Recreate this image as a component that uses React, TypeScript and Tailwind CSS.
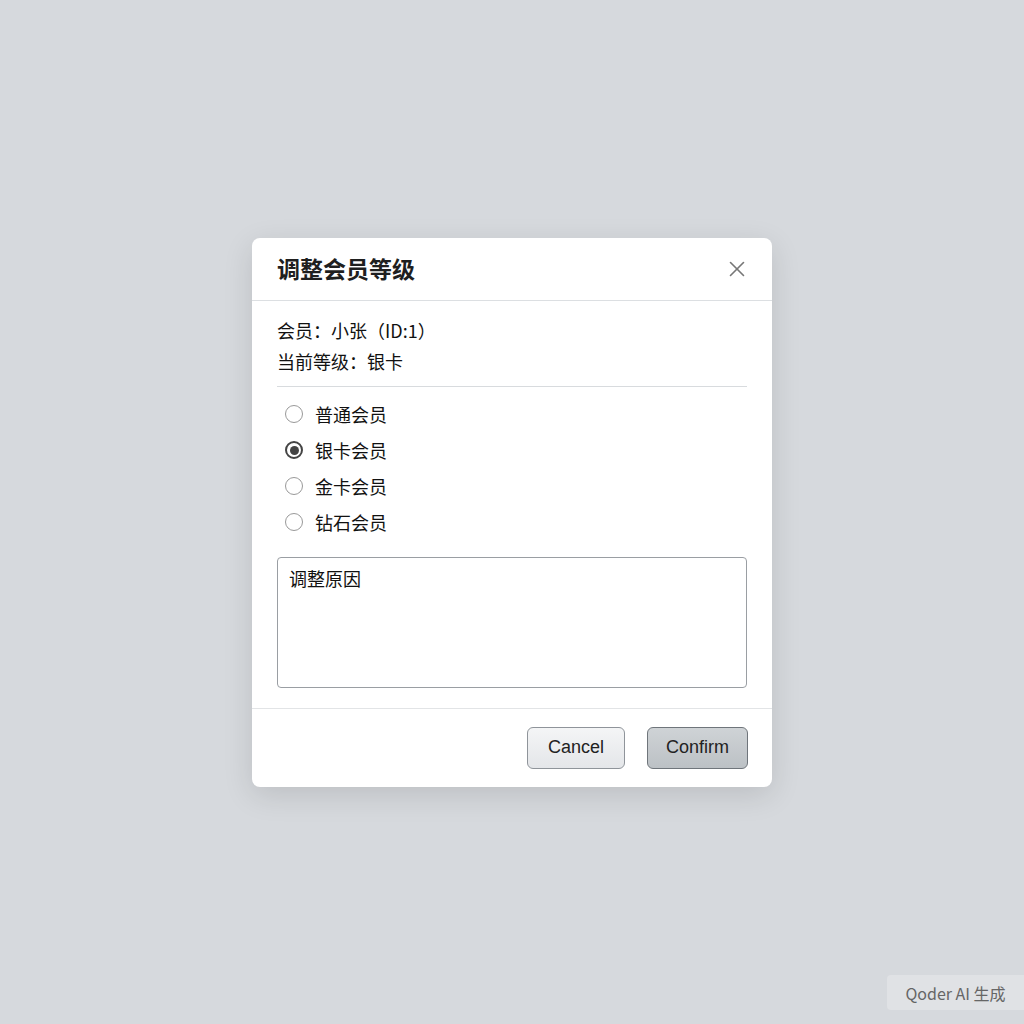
import { X } from "lucide-react";

const levels = ["普通会员", "银卡会员", "金卡会员", "钻石会员"];

const font = { fontFamily: '"Noto Sans CJK SC", "Noto Sans", sans-serif' };

export default function App() {
  return (
    <div
      className="w-[1024px] h-[1024px] bg-[#d6d9dd] flex items-center justify-center relative"
      style={font}
    >
      <div className="w-[520px] bg-white rounded-lg shadow-[0_8px_30px_rgba(0,0,0,0.12)] flex flex-col">
        {/* Header */}
        <div className="h-[63px] flex items-center justify-between pl-[25px] pr-[22px] border-b border-[#dcdfe2]">
          <h2 className="text-[23px] font-bold text-[#1f1f1f]">调整会员等级</h2>
          <X className="w-[26px] h-[26px] text-[#777]" strokeWidth={1.5} />
        </div>

        {/* Body */}
        <div className="px-[25px] pt-[14px]">
          <div className="text-[18px] text-[#111] leading-[31px]">
            <p>会员：小张（ID:1）</p>
            <p>当前等级：银卡</p>
          </div>
          <div className="border-b border-[#d8dbde] mt-[9px]" />

          <div className="flex flex-col gap-[13px] pt-[16px] pl-[8px]">
            {levels.map((l, i) => (
              <label key={l} className="flex items-center gap-[12px] h-[23px]">
                <span
                  className={
                    i === 1
                      ? "w-[18px] h-[18px] rounded-full border-[2px] border-[#444] flex items-center justify-center"
                      : "w-[18px] h-[18px] rounded-full border border-[#999]"
                  }
                >
                  {i === 1 && <span className="w-[9px] h-[9px] rounded-full bg-[#444]" />}
                </span>
                <span className="text-[18px] text-[#111]">{l}</span>
              </label>
            ))}
          </div>

          <div className="mt-[23px] h-[131px] border border-[#9a9ea3] rounded-[4px] px-[11px] pt-[7px] text-[18px] text-[#111]">
            调整原因
          </div>
        </div>

        {/* Footer */}
        <div className="mt-[20px] border-t border-[#e2e4e6] h-[79px] flex items-center justify-end gap-[22px] pr-[24px]">
          <button
            className="w-[98px] h-[42px] rounded-[6px] border border-[#8f949a] bg-gradient-to-b from-[#f4f5f6] to-[#e4e6e9] text-[18px] text-[#222]"
            style={{ fontFamily: '"Liberation Sans", Arial, sans-serif' }}
          >
            Cancel
          </button>
          <button
            className="w-[101px] h-[42px] rounded-[6px] border border-[#6f757b] bg-gradient-to-b from-[#cfd3d6] to-[#bcc1c5] text-[18px] text-[#222]"
            style={{ fontFamily: '"Liberation Sans", Arial, sans-serif' }}
          >
            Confirm
          </button>
        </div>
      </div>

      <div className="absolute right-0 bottom-[14px] w-[137px] h-[35px] bg-[#e0e2e5] rounded-l-[4px] flex items-center justify-center text-[16px] text-[#666]">
        Qoder AI 生成
      </div>
    </div>
  );
}
